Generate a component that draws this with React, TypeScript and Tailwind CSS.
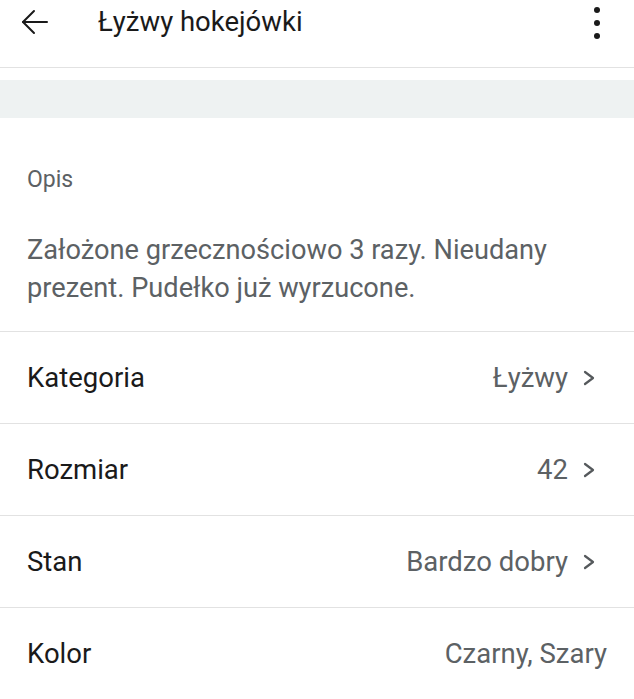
import React from 'react';

function BackArrow() {
  return (
    <svg width="28" height="28" viewBox="0 0 28 28" fill="none" stroke="#1a1a1a" strokeWidth="2" strokeLinecap="round" strokeLinejoin="round">
      <path d="M26 14H2" />
      <path d="M13 3L2 14l11 11" />
    </svg>
  );
}

function Chevron() {
  return (
    <svg width="12" height="16" viewBox="0 0 12 16" fill="none" stroke="#55595c" strokeWidth="2.2" strokeLinecap="round" strokeLinejoin="round" className="ml-[15px] mr-[12px]">
      <path d="M2 2l8 6-8 6" />
    </svg>
  );
}

type Row = { label: string; value: string; arrow: boolean };

const rows: Row[] = [
  { label: 'Kategoria', value: 'Łyżwy', arrow: true },
  { label: 'Rozmiar', value: '42', arrow: true },
  { label: 'Stan', value: 'Bardzo dobry', arrow: true },
  { label: 'Kolor', value: 'Czarny, Szary', arrow: false },
];

export default function App() {
  return (
    <div className="w-[634px] h-[699px] overflow-hidden bg-white font-['Roboto',sans-serif]">
      {/* Header */}
      <header className="h-[68px] border-b border-[#e2e2e2]">
        <div className="h-[44px] flex items-center pl-[21px] pr-[34px]">
          <BackArrow />
          <h1 className="ml-[49px] text-[27.5px] text-[#1a1a1a] leading-none flex-1">Łyżwy hokejówki</h1>
          <div className="flex flex-col items-center gap-[7px] pt-[1px]">
            <span className="w-[6px] h-[6px] rounded-full bg-[#1a1a1a]" />
            <span className="w-[6px] h-[6px] rounded-full bg-[#1a1a1a]" />
            <span className="w-[6px] h-[6px] rounded-full bg-[#1a1a1a]" />
          </div>
        </div>
      </header>

      <div className="h-[12px]" />
      <div className="h-[38px] bg-[#eef2f2]" />

      {/* Opis */}
      <section className="px-[27px] pt-[48px] pb-[24px] border-b border-[#e2e2e2]">
        <p className="text-[23px] leading-[28px] text-[#5c6164]">Opis</p>
        <p className="mt-[37px] text-[27.2px] leading-[38px] text-[#5c6164]">
          Założone grzecznościowo 3 razy. Nieudany prezent. Pudełko już wyrzucone.
        </p>
      </section>

      {rows.map((r) => (
        <div key={r.label} className="h-[92px] flex items-center pl-[27px] pr-[27px] border-b border-[#e2e2e2]">
          <span className="flex-1 text-[27.5px] text-[#1a1a1a]">{r.label}</span>
          <span className="text-[27.5px] text-[#5c6164]">{r.value}</span>
          {r.arrow && <Chevron />}
        </div>
      ))}
    </div>
  );
}
